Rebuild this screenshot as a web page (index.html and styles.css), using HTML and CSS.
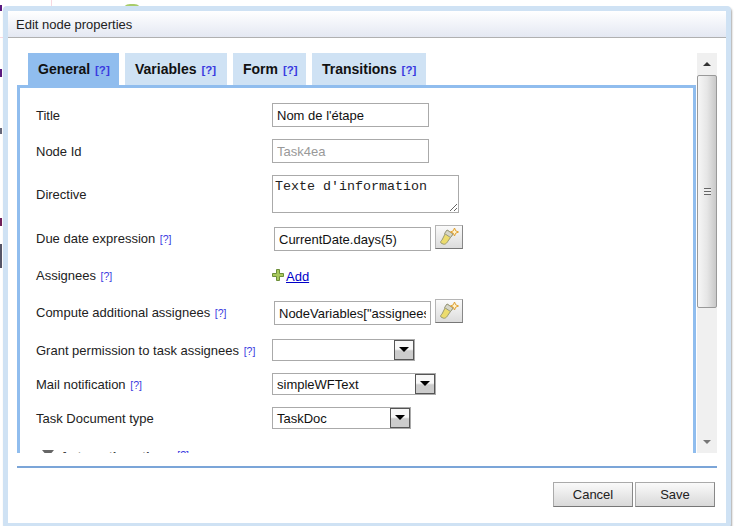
FILE: index.html
```html
<!DOCTYPE html>
<html lang="en">
<head>
  <meta charset="UTF-8">
  <meta name="viewport" content="width=device-width, initial-scale=1.0">
  <title>Edit node properties</title>
  <link rel="stylesheet" href="styles.css">
</head>
<body>
  <!-- bits of the page behind the dialog -->
  <div class="backdrop">
    <div class="bg-line"></div>
    <div class="bg-rule"></div>
    <div class="bg-blob"></div>
    <div class="bg-bit bit-1"></div>
    <div class="bg-bit bit-2"></div>
    <div class="bg-bit bit-3"></div>
    <div class="bg-bit bit-4"></div>
    <div class="bg-bit bit-5"></div>
  </div>

  <div class="dialog">
    <div class="dialog-title">Edit node properties</div>

    <div class="dialog-body">
      <div class="panel">
        <div class="tabs">
          <div class="tab tab-general active">General <span class="help">[?]</span></div>
          <div class="tab tab-variables">Variables <span class="help">[?]</span></div>
          <div class="tab tab-form">Form <span class="help">[?]</span></div>
          <div class="tab tab-transitions">Transitions <span class="help">[?]</span></div>
        </div>
        <div class="tab-content">
          <div class="row">
            <label class="row-label">Title</label>
            <input class="field" type="text" value="Nom de l'étape">
          </div>
          <div class="row">
            <label class="row-label">Node Id</label>
            <input class="field readonly" type="text" value="Task4ea" readonly>
          </div>
          <div class="row">
            <label class="row-label">Directive</label>
            <textarea class="field-area">Texte d'information</textarea>
          </div>
          <div class="row row-expr">
            <label class="row-label">Due date expression <span class="help">[?]</span></label>
            <input class="field expr" type="text" value="CurrentDate.days(5)">
            <button class="wand-btn" type="button">
              <svg width="20" height="20" viewBox="0 0 20 20"><use href="#wand"/></svg>
            </button>
          </div>
          <div class="row row-add">
            <label class="row-label">Assignees <span class="help">[?]</span></label>
            <svg class="plus" width="12" height="12" viewBox="0 0 12 12">
              <path d="M4.500.5h3v4h4v3h-4v4h-3v-4h-4v-3h4z" fill="#a9c95c" stroke="#6d8f3a"/>
            </svg>
            <a class="add-link" href="#">Add</a>
          </div>
          <div class="row row-expr">
            <label class="row-label">Compute additional assignees <span class="help">[?]</span></label>
            <input class="field expr" type="text" value='NodeVariables["assignees"]'>
            <button class="wand-btn" type="button">
              <svg width="20" height="20" viewBox="0 0 20 20"><use href="#wand"/></svg>
            </button>
          </div>
          <div class="row row-select">
            <label class="row-label">Grant permission to task assignees <span class="help">[?]</span></label>
            <div class="select select-grant"><span class="select-value"></span><span class="select-arrow"></span></div>
          </div>
          <div class="row">
            <label class="row-label">Mail notification <span class="help">[?]</span></label>
            <div class="select select-mail"><span class="select-value">simpleWFText</span><span class="select-arrow"></span></div>
          </div>
          <div class="row">
            <label class="row-label">Task Document type</label>
            <div class="select select-doc"><span class="select-value">TaskDoc</span><span class="select-arrow"></span></div>
          </div>
          <div class="section-head"><span class="caret"></span>Automatic actions <span class="help">[?]</span></div>
        </div>
      </div>

      <div class="scrollbar">
        <div class="scroll-btn"><span class="arrow-up"></span></div>
        <div class="scroll-thumb"><span class="grip"></span></div>
        <div class="scroll-track"></div>
        <div class="scroll-btn"><span class="arrow-down"></span></div>
      </div>
    </div>

    <div class="dialog-footer">
      <button class="btn" type="button">Cancel</button>
      <button class="btn" type="button">Save</button>
    </div>
  </div>

  <svg class="icon-defs" width="0" height="0">
    <symbol id="wand" viewBox="0 0 20 20">
      <path d="M8 3l6 4-5 7c-1 2-3 4-5 3l-2-1c-1-1 0-2 1-3z" fill="#ecdc6e" stroke="#9a9a70"/>
      <path d="M8 3l6 4-2.500 3.500-6-4z" fill="#d6d6c8" stroke="#9a9a80"/>
      <path d="M15.500 1l1.200 2.800 2.800 1.200-2.800 1.200-1.200 2.800-1.200-2.800-2.800-1.200 2.800-1.200z" fill="#fff3cf" stroke="#e0a030"/>
    </symbol>
  </svg>
</body>
</html>
```

FILE: styles.css
```css
html, body {
  margin: 0;
  padding: 0;
  height: 100%;
  overflow: hidden;
}
body {
  background: #fff;
  font-family: "Liberation Sans", Arial, sans-serif;
  font-size: 13px;
  color: #222;
}

/* page behind the dialog */
.backdrop div {
  position: absolute;
}
.bg-line {
  left: 51px;
  top: 0;
  width: 1px;
  height: 526px;
  background: #f8d8e0;
}
.bg-rule {
  left: 0;
  top: 37px;
  width: 51px;
  height: 1px;
  background: #f8d8e0;
}
.bg-blob {
  left: 122px;
  top: 4px;
  width: 20px;
  height: 8px;
  border-radius: 10px 10px 0 0;
  background: #a8cc6a;
}
.bg-bit {
  left: 0;
  width: 2px;
  background: #5a1a80;
}
.bit-1 { top: 5px; height: 6px; }
.bit-2 { top: 69px; height: 8px; }
.bit-3 { top: 128px; height: 6px; background: #667; }
.bit-4 { top: 218px; height: 8px; background: #70205a; }
.bit-5 { top: 244px; height: 24px; background: #556; }

/* dialog */
.dialog {
  position: absolute;
  left: 3px;
  top: 6px;
  width: 718px;
  height: 512px;
  border: 5px solid #cfe2f4;
  border-radius: 4px;
  background: #fff;
  box-shadow: 1px 2px 2px #aaa;
  display: flex;
  flex-direction: column;
}
.dialog-title {
  height: 26px;
  line-height: 27px;
  padding-left: 8px;
  font-size: 13px;
  color: #222;
  background: linear-gradient(#fff, #e4e8f2);
  border-bottom: 1px solid #b0b0b0;
}
.dialog-body {
  display: flex;
  height: 400px;
  margin: 15px 9px 0;
}
.panel {
  width: 679px;
  overflow: hidden;
}

/* tabs */
.tabs {
  display: flex;
  gap: 6px;
  padding-left: 11px;
}
.tab {
  height: 32px;
  line-height: 33px;
  box-sizing: border-box;
  padding-left: 10px;
  background: #cfe2f4;
  font-size: 14px;
  font-weight: bold;
  color: #111;
  white-space: nowrap;
}
.tab.active {
  background: #90bdee;
}
.tab-general { width: 91px; }
.tab-variables { width: 102px; }
.tab-form { width: 73px; }
.tab-transitions { width: 114px; }
.tab .help {
  font-size: 11.5px;
  font-weight: bold;
  margin-left: 1px;
}
.help {
  color: #3a3ae0;
  font-size: 10.5px;
  font-weight: normal;
  margin-left: 1px;
}
.tab-content {
  height: 400px;
  box-sizing: border-box;
  border: 3px solid #90bdee;
  padding: 15px 0 0 16px;
  display: flex;
  flex-direction: column;
  gap: 12px;
}

/* form rows */
.row {
  display: flex;
  align-items: center;
}
.row-label {
  width: 236px;
  flex-shrink: 0;
  padding-top: 1px;
  font-size: 13px;
  color: #222;
}
.field {
  width: 157px;
  height: 24px;
  box-sizing: border-box;
  border: 1px solid #aaa;
  padding: 0 4px;
  margin: 0;
  font-family: "Liberation Sans", Arial, sans-serif;
  font-size: 13px;
  color: #111;
}
.field.readonly {
  color: #999;
}
.field.expr {
  margin-left: 2px;
  align-self: flex-end;
}
.field-area {
  width: 187px;
  height: 38px;
  box-sizing: border-box;
  border: 1px solid #aaa;
  padding: 3px 2px 0;
  margin: 0;
  font-family: "Liberation Mono", "Courier New", monospace;
  font-size: 13.33px;
  color: #222;
}
.row-expr {
  height: 26px;
}
.wand-btn {
  width: 28px;
  height: 24px;
  margin-left: 4px;
  align-self: flex-start;
  padding: 0;
  border: 1px solid #b5b5b5;
  border-bottom-color: #777;
  border-right-color: #888;
  background: linear-gradient(#fafafa, #dcdcdc);
  display: flex;
  align-items: center;
  justify-content: center;
}
.row-add {
  height: 24px;
}
.plus {
  margin-right: 2px;
}
.add-link {
  color: #0000c8;
  font-size: 13px;
  margin-top: 3px;
}
.row-select {
  margin-top: 2px;
}
.select {
  height: 22px;
  box-sizing: border-box;
  border: 1px solid #aaa;
  display: flex;
  align-items: center;
  justify-content: space-between;
}
.select-grant { width: 143px; }
.select-mail { width: 164px; }
.select-doc { width: 139px; }
.select-value {
  padding-left: 4px;
  font-size: 13px;
  color: #111;
}
.select-arrow {
  position: relative;
  width: 20px;
  height: 20px;
  box-sizing: border-box;
  border: 1px solid #555;
  background: linear-gradient(#f8f8f8 45%, #ccc 55%);
}
.select-arrow::after {
  content: "";
  position: absolute;
  left: 4px;
  top: 6px;
  border-left: 5px solid transparent;
  border-right: 5px solid transparent;
  border-top: 5px solid #000;
}
.section-head {
  display: flex;
  align-items: flex-start;
  padding-left: 6px;
  margin-top: 8px;
  font-size: 13px;
  font-weight: bold;
  color: #444;
  white-space: pre;
}
.caret {
  width: 0;
  height: 0;
  margin: 1px 6px 0 0;
  border-left: 6px solid transparent;
  border-right: 6px solid transparent;
  border-top: 7px solid #666;
}

/* scrollbar */
.scrollbar {
  width: 20px;
  margin-left: 1px;
  background: #f0f0f0;
  display: flex;
  flex-direction: column;
}
.scroll-btn {
  height: 22px;
  display: flex;
  align-items: center;
  justify-content: center;
}
.arrow-up, .arrow-down {
  width: 0;
  height: 0;
  border-left: 4px solid transparent;
  border-right: 4px solid transparent;
}
.arrow-up {
  border-bottom: 4px solid #333;
}
.arrow-down {
  border-top: 4px solid #777;
}
.scroll-thumb {
  height: 233px;
  box-sizing: border-box;
  border: 1px solid #999;
  border-radius: 2px;
  background: linear-gradient(90deg, #f6f6f6, #e6e6e6 50%, #c8c8c8);
  display: flex;
  align-items: center;
  justify-content: center;
}
.grip {
  width: 7px;
  height: 7px;
  background: repeating-linear-gradient(#666 0 1px, #eee 1px 3px);
}
.scroll-track {
  flex: 1;
}

/* footer */
.dialog-footer {
  margin: 13px 9px 0;
  padding: 14px 2px 0 0;
  border-top: 2px solid #7ba5d8;
  display: flex;
  justify-content: flex-end;
  gap: 2px;
}
.btn {
  width: 80px;
  height: 25px;
  padding: 0;
  border: 1px solid #aaa;
  border-bottom-color: #777;
  border-right-color: #888;
  background: linear-gradient(#fafafa, #d9d9d9);
  font-family: "Liberation Sans", Arial, sans-serif;
  font-size: 13px;
  color: #222;
}
.icon-defs {
  position: absolute;
}
```
